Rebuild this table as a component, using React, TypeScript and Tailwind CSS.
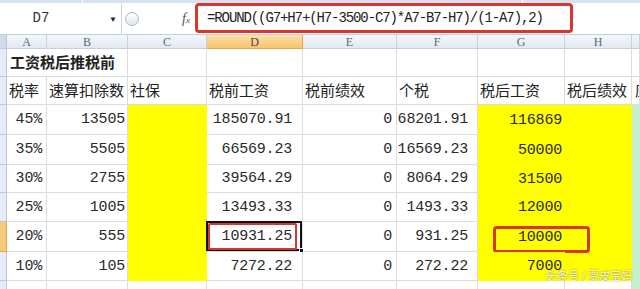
const grid = "grid grid-cols-[7px_40px_81px_79px_96px_94px_81px_87px_67px_8px]";
const mono = "font-['Liberation_Mono',monospace] text-[15px] tracking-[-0.2px] text-[#2a2a2a]";
const cjk = "font-['Noto_Sans_CJK_SC',sans-serif] text-[15px] text-[#222]";
const line = "border-r border-b border-[#dadcdd]";

const data = [
  { h: "h-[30px]", v: ["45%", "13505", "185070.91", "0", "68201.91", "116869"] },
  { h: "h-[30px]", v: ["35%", "5505", "66569.23", "0", "16569.23", "50000"] },
  { h: "h-[28px]", v: ["30%", "2755", "39564.29", "0", "8064.29", "31500"] },
  { h: "h-[29px]", v: ["25%", "1005", "13493.33", "0", "1493.33", "12000"] },
  { h: "h-[30px]", v: ["20%", "555", "10931.25", "0", "931.25", "10000"] },
  { h: "h-[29px]", v: ["10%", "105", "7272.22", "0", "272.22", "7000"] },
];

const heads = ["税率", "速算扣除数", "社保", "税前工资", "税前绩效", "个税", "税后工资", "税后绩效", "应"];
const letters = ["A", "B", "C", "D", "E", "F", "G", "H", ""];

const RowNum = ({ active }: { active?: boolean }) => (
  <div className={`border-r border-b ${active ? "bg-[#f7c97a] border-[#e9a84a]" : "bg-[#e4ecf7] border-[#b8c9de]"}`} />
);

export default function App() {
  return (
    <div className="relative w-[640px] h-[289px] overflow-hidden bg-white">
      {/* ribbon edge */}
      <div className="h-[3px] bg-[#d6e2f1] flex">
        <div className="w-[83px] border-r border-white" />
        <div className="w-[440px] border-r border-white" />
      </div>

      {/* formula bar */}
      <div className="flex h-[32px] bg-white border-b border-[#c3cfdd]">
        <div className="w-[122px] flex items-center border-r border-[#c9d3df]">
          <span className="w-[82px] text-center font-['Liberation_Mono',monospace] text-[14px] text-[#333]">D7</span>
          <span className="ml-auto mr-[4px] text-[8px] text-[#222]">▼</span>
        </div>
        <div className="w-[73px] flex items-center">
          <div className="ml-[3px] w-[14px] h-[14px] rounded-full border border-[#a9b4c2] bg-gradient-to-b from-white to-[#dfe6ee]" />
          <span className="ml-auto mr-[5px] italic font-['Liberation_Serif',serif] text-[14px] text-[#555]">
            f<span className="text-[9px]">x</span>
          </span>
        </div>
        <div className="w-[378px] mb-[1px] border-[3px] border-[#d8362d] rounded-[4px] flex items-center pl-[9px] overflow-hidden">
          <span className="font-['Liberation_Mono',monospace] text-[14px] tracking-[-1.1px] text-[#222] whitespace-nowrap">
            =ROUND((G7+H7+(H7-3500-C7)*A7-B7-H7)/(1-A7),2)
          </span>
        </div>
      </div>

      {/* column headers */}
      <div className={`${grid} h-[14px]`}>
        <div className="bg-[#cfdbea] border-r border-b border-[#b8c9de]" />
        {letters.map((l, i) => (
          <div
            key={i}
            className={`flex items-center justify-center border-r border-b font-['Liberation_Serif',serif] text-[12px] leading-none ${
              l === "D"
                ? "bg-gradient-to-b from-[#fbe1a8] to-[#f5c46c] border-[#e5a94c] text-[#4a4a4a]"
                : "bg-gradient-to-b from-[#f4f7fb] to-[#e3e9f1] border-[#c5d1df] text-[#5a6b80]"
            }`}
          >
            {l}
          </div>
        ))}
      </div>

      {/* title row */}
      <div className={`${grid} h-[28px]`}>
        <RowNum />
        <div className={`col-span-2 ${line} flex items-center pl-[3px] font-bold ${cjk}`}>工资税后推税前</div>
        {[0, 1, 2, 3, 4, 5, 6].map((i) => (
          <div key={i} className={line} />
        ))}
      </div>

      {/* header row */}
      <div className={`${grid} h-[28px]`}>
        <RowNum />
        {heads.map((h, i) => (
          <div key={i} className={`${line} flex items-center overflow-hidden whitespace-nowrap ${i === 8 ? "pl-[3px]" : "pl-[2px]"} ${cjk}`}>
            {h}
          </div>
        ))}
      </div>

      {/* data rows */}
      {data.map((r, ri) => {
        const active = ri === 4;
        return (
          <div key={ri} className={`${grid} ${r.h}`}>
            <RowNum active={active} />
            <div className={`${line} flex items-center justify-end pr-[4px] pt-[2px] ${mono}`}>{r.v[0]}</div>
            <div className={`${line} flex items-center justify-end pr-[2px] pt-[2px] ${mono}`}>{r.v[1]}</div>
            <div className="bg-[#ffff00]" />
            <div className={`${line} relative flex items-center justify-end pr-[10px] pt-[2px] ${mono}`}>
              {r.v[2]}
              {active && (
                <>
                  <div className="absolute -left-[1px] -top-[1px] right-0 bottom-0 border-2 border-[#111]" />
                  <div className="absolute left-[1px] top-[1px] right-[5px] bottom-[1px] border-2 border-[#d8362d] rounded-[2px]" />
                  <div className="absolute -right-[2px] -bottom-[2px] w-[5px] h-[5px] bg-[#111] border border-white" />
                </>
              )}
            </div>
            <div className={`${line} flex items-center justify-end pr-[4px] pt-[2px] ${mono}`}>{r.v[3]}</div>
            <div className={`${line} flex items-center justify-end pr-[9px] pt-[2px] ${mono}`}>{r.v[4]}</div>
            <div className={`relative bg-[#ffff00] flex items-center justify-end pr-[3px] pt-[2px] ${mono}`}>
              {r.v[5]}
              {active && (
                <div className="absolute left-[15px] top-[4px] w-[97px] h-[27px] border-[3px] border-[#d8362d] rounded-[4px]" />
              )}
            </div>
            <div className="bg-[#ffff00]" />
            <div className="bg-[#c6efce] border-b border-[#c6efce]" />
          </div>
        );
      })}

      {/* next row */}
      <div className={`${grid} h-[28px]`}>
        <RowNum />
        {[0, 1, 2, 3, 4, 5, 6, 7].map((i) => (
          <div key={i} className={line} />
        ))}
        <div className="bg-[#c6efce]" />
      </div>

      {/* watermark */}
      <div className="absolute left-[546px] top-[267px] font-['Noto_Sans_CJK_SC',sans-serif] text-[11px] text-white/90 whitespace-nowrap [text-shadow:0_0_2px_rgba(0,0,0,0.55)]">
        头条号 / 贾皮宝妈
      </div>
    </div>
  );
}
